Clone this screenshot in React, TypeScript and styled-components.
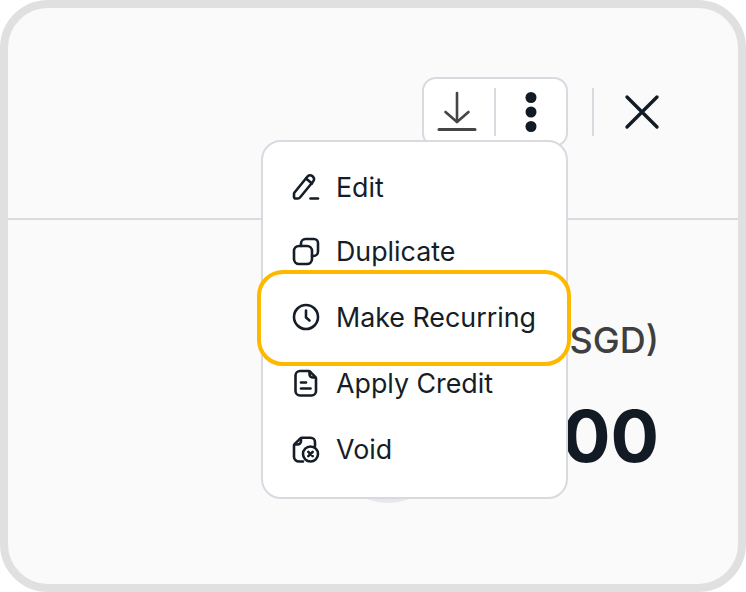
import { FC, ReactNode } from "react";
import styled, { createGlobalStyle } from "styled-components";

const GlobalStyle = createGlobalStyle`
  html, body {
    margin: 0;
    padding: 0;
    background: #ffffff;
    font-family: "Inter", "Liberation Sans", sans-serif;
  }
`;

const Frame = styled.div`
  width: 746px;
  height: 592px;
  box-sizing: border-box;
  background: #fafafa;
  border: 8px solid #e0e0e0;
  border-radius: 48px;
  overflow: hidden;
  display: flex;
  flex-direction: column;
  position: relative;
`;

const Header = styled.header`
  height: 212px;
  flex-shrink: 0;
  box-sizing: border-box;
  border-bottom: 2px solid #dadae0;
  padding: 69px 77px 0 0;
  display: flex;
  justify-content: flex-end;
  align-items: flex-start;
`;

const ButtonGroup = styled.div`
  width: 146px;
  height: 70px;
  box-sizing: border-box;
  background: #ffffff;
  border: 2px solid #d9d9e0;
  border-radius: 14px;
  display: flex;
  align-items: center;
`;

const IconCell = styled.div<{ $divided?: boolean }>`
  flex: ${(p) => (p.$divided ? "0 0 70px" : "1")};
  box-sizing: ${(p) => (p.$divided ? "content-box" : "border-box")};
  height: 48px;
  display: flex;
  align-items: center;
  justify-content: center;
  border-right: ${(p) => (p.$divided ? "2px solid #d9d9e0" : "none")};
`;

const DownloadIcon = styled.svg`
  margin-right: 4px;
`;

const Separator = styled.div`
  width: 2px;
  height: 48px;
  background: #d9d9e0;
  margin: 11px 29px 0 24px;
`;

const CloseCell = styled.div`
  width: 38px;
  height: 70px;
  display: flex;
  align-items: center;
  justify-content: center;
`;

const Body = styled.section`
  flex: 1;
  padding: 98px 79px 0 0;
  display: flex;
  flex-direction: column;
  align-items: flex-end;
`;

const AmountLabel = styled.div`
  font-size: 36px;
  line-height: 44px;
  font-weight: 500;
  color: #3f3f3f;
`;

const AmountValue = styled.div`
  margin-top: 32px;
  font-size: 72px;
  line-height: 84px;
  font-weight: 700;
  color: #121a23;
`;

const Backdrop = styled.div`
  position: absolute;
  left: 342px;
  top: 449px;
  width: 76px;
  height: 46px;
  border-radius: 50%;
  background: #e8e8ea;
`;

const Menu = styled.div`
  position: absolute;
  left: 253px;
  top: 132px;
  width: 307px;
  height: 359px;
  box-sizing: border-box;
  background: #ffffff;
  border: 2px solid #d9d9e0;
  border-radius: 20px;
  padding: 12px 0 0;
  display: flex;
  flex-direction: column;
`;

const MenuRow = styled.div<{ $active?: boolean }>`
  height: ${(p) => (p.$active ? "96px" : "66px")};
  margin: ${(p) => (p.$active ? "-14px -5px -16px -6px" : "0")};
  padding-bottom: ${(p) => (p.$active ? "2px" : "0")};
  box-sizing: border-box;
  position: relative;
  z-index: ${(p) => (p.$active ? 1 : 0)};
  background: #ffffff;
  border: ${(p) => (p.$active ? "4px solid #ffb800" : "none")};
  border-radius: 26px;
  padding-left: ${(p) => (p.$active ? "29px" : "27px")};
  display: flex;
  align-items: center;
  gap: 14px;

  &:first-child {
    height: 64px;
    padding-top: 2px;
  }
`;

const RowIcon = styled.span`
  width: 32px;
  height: 32px;
  flex-shrink: 0;
  display: block;
`;

const RowLabel = styled.span`
  font-size: 26.8px;
  line-height: 32px;
  font-weight: 400;
  color: #151d27;
  white-space: nowrap;
`;

const Glyph: FC<{ children: ReactNode }> = ({ children }) => (
  <RowIcon>
    <svg width="32" height="32" viewBox="0 0 32 32" fill="none" stroke="#151d27" strokeWidth="2.6" strokeLinecap="round" strokeLinejoin="round">
      {children}
    </svg>
  </RowIcon>
);

const items: { label: string; active?: boolean; icon: ReactNode }[] = [
  {
    label: "Edit",
    icon: (
      <>
        <path d="M4.500 21.500 17.500 5.500c1.200-1.500 3.300-1.700 4.800-.5l.5.400c1.500 1.200 1.700 3.300.5 4.800L10 26.500c-.5.600-1.200 1-2 1H5.800c-1 0-1.800-.8-1.800-1.800v-2.700c0-.6.200-1.100.5-1.500Z" />
        <path d="m16 7.500 6 5" />
        <path d="M20.500 27.500h7.500" />
      </>
    ),
  },
  {
    label: "Duplicate",
    icon: (
      <>
        <rect x="4" y="11" width="18" height="18" rx="5" />
        <path d="M11 11V8.500C11 6 13 4 15.500 4H24c2.200 0 4 1.800 4 4v8.500c0 2.500-2 4.500-4.500 4.500H22" />
      </>
    ),
  },
  {
    label: "Make Recurring",
    active: true,
    icon: (
      <>
        <circle cx="16" cy="16" r="12" />
        <path d="M16 9.500V16.500l3.500 3" />
      </>
    ),
  },
  {
    label: "Apply Credit",
    icon: (
      <>
        <path d="M10 4h8.500c.6 0 1.100.2 1.500.6l5.300 5.300c.5.400.7 1 .7 1.600V24c0 2.500-2 4.500-4.500 4.500H10c-2.500 0-4.500-2-4.500-4.500V8.500C5.500 6 7.500 4 10 4Z" />
        <path d="M11 15.500h5" />
        <path d="M11 21.500h9.500" />
        <path d="M19.500 4.500v2.500c0 2 1.300 3.500 3.500 3.500H25.500" />
      </>
    ),
  },
  {
    label: "Void",
    icon: (
      <>
        <path d="M13 28.500H9c-2.500 0-5-2-5-4.500V12.500c0-.6.200-1 .6-1.400l5.800-5.800c.4-.4.900-.6 1.400-.6H20.500c2.500 0 4.500 2 4.500 4.500V13" />
        <path d="M11 5.500v2.500c0 2-1.500 3.500-3.500 3.500H5" />
        <circle cx="20.500" cy="21" r="7.500" />
        <path d="m18.300 18.800 4.400 4.400M22.700 18.800l-4.400 4.400" />
      </>
    ),
  },
];

export default function App() {
  return (
    <>
      <GlobalStyle />
      <Frame>
        <Header>
          <ButtonGroup>
            <IconCell $divided>
              <DownloadIcon width="40" height="42" viewBox="0 0 40 42" fill="none" stroke="#454545" strokeWidth="2.600" strokeLinecap="round" strokeLinejoin="round">
                <path d="M20 2v29" />
                <path d="m8.500 21 11.500 10 11.500-10" />
                <path d="M2 38.500h36" strokeWidth="3" />
              </DownloadIcon>
            </IconCell>
            <IconCell>
              <svg width="12" height="40" viewBox="0 0 12 40" fill="#121a23">
                <circle cx="6" cy="5.500" r="5.500" />
                <circle cx="6" cy="20" r="5.500" />
                <circle cx="6" cy="34.500" r="5.500" />
              </svg>
            </IconCell>
          </ButtonGroup>
          <Separator />
          <CloseCell>
            <svg width="36" height="36" viewBox="0 0 36 36" fill="none" stroke="#121a23" strokeWidth="3.400" strokeLinecap="round">
              <path d="M3 3l30 30M33 3 3 33" />
            </svg>
          </CloseCell>
        </Header>
        <Body>
          <AmountLabel>Amount (SGD)</AmountLabel>
          <AmountValue>1,000.00</AmountValue>
        </Body>
        <Backdrop />
        <Menu>
          {items.map((item) => (
            <MenuRow key={item.label} $active={item.active}>
              <Glyph>{item.icon}</Glyph>
              <RowLabel>{item.label}</RowLabel>
            </MenuRow>
          ))}
        </Menu>
      </Frame>
    </>
  );
}
